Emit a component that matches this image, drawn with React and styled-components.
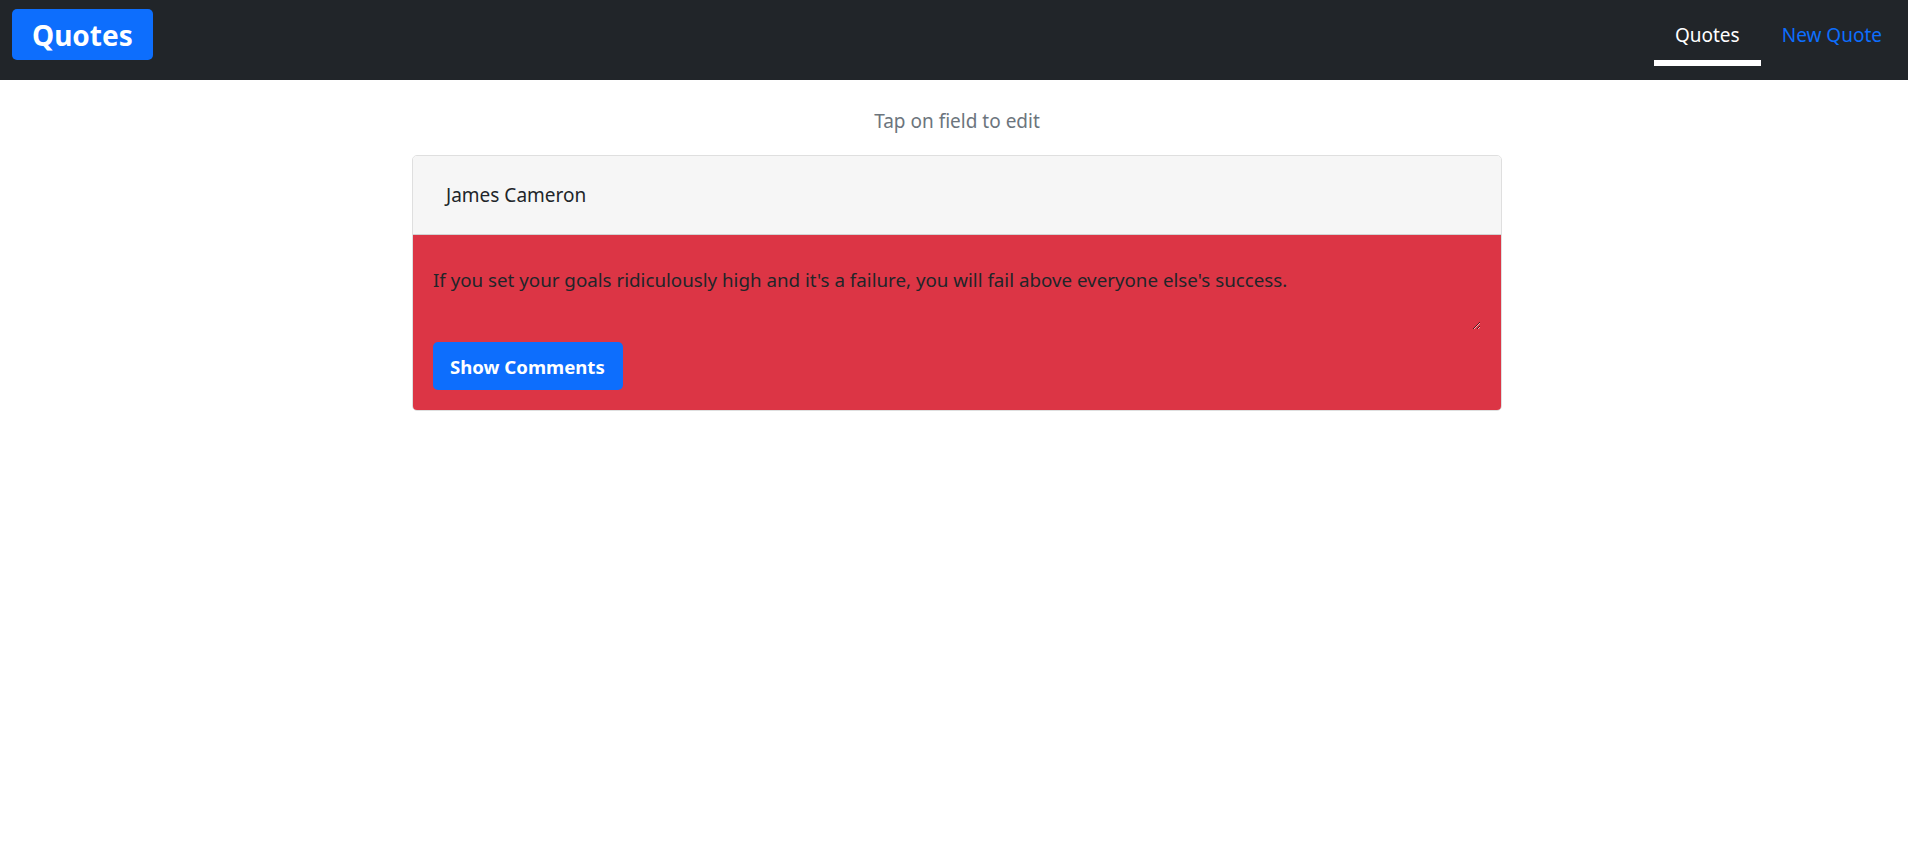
import React, { useState } from 'react';
import styled, { createGlobalStyle } from 'styled-components';

const GlobalStyle = createGlobalStyle`
  body {
    margin: 0;
    background: #fff;
    font-family: "Noto Sans", "Open Sans", sans-serif;
    color: #212529;
  }
  * { box-sizing: border-box; }
`;

const Header = styled.header`
  height: 80px;
  background: #212529;
  display: flex;
  align-items: flex-start;
  justify-content: space-between;
  padding: 9px 26px 0 12px;
`;

const Brand = styled.a`
  display: flex;
  align-items: center;
  height: 51px;
  padding: 0 20px;
  background: #0d6efd;
  border-radius: 5px;
  color: #fff;
  font-size: 28px;
  font-weight: 700;
  text-decoration: none;
`;

const Nav = styled.nav`
  display: flex;
  align-items: flex-start;
  gap: 21px;
  margin-top: -9px;
`;

const NavLink = styled.a`
  display: block;
  padding: 22px ${({ $active }) => ($active ? '21px' : '0')} 12px;
  font-size: 19px;
  line-height: 26px;
  color: ${({ $active }) => ($active ? '#fff' : '#0d6efd')};
  text-decoration: none;
  border-bottom: 6px solid ${({ $active }) => ($active ? '#fff' : 'transparent')};
`;

const Main = styled.main`
  display: flex;
  flex-direction: column;
  align-items: center;
  padding: 29px 0 0 6px;
`;

const Hint = styled.p`
  margin: 0 0 21px;
  font-size: 19px;
  line-height: 25px;
  color: #6c757d;
`;

const Card = styled.section`
  width: 1090px;
  border: 1px solid #dfdfdf;
  border-radius: 5px;
  overflow: hidden;
`;

const CardHeader = styled.div`
  height: 79px;
  display: flex;
  align-items: center;
  padding: 0 33px;
  background: #f6f6f6;
  border-bottom: 1px solid #d2d2d2;
  font-size: 19px;
`;

const CardBody = styled.div`
  background: #dc3545;
  padding: 20px;
  display: flex;
  flex-direction: column;
  align-items: flex-start;
  gap: 12px;
`;

const QuoteText = styled.textarea`
  width: 100%;
  height: 75px;
  padding: 11px 0 0;
  border: none;
  outline: none;
  background: transparent;
  color: #212529;
  font-family: inherit;
  font-size: 18.75px;
  line-height: 28px;
  resize: vertical;
`;

const Button = styled.button`
  height: 48px;
  padding: 0 18px 0 17px;
  border: none;
  border-radius: 5px;
  background: #0d6efd;
  color: #fff;
  font-family: inherit;
  font-size: 18.6px;
  font-weight: 700;
  cursor: pointer;
`;

const App = () => {
  const [quote, setQuote] = useState(
    "If you set your goals ridiculously high and it's a failure, you will fail above everyone else's success."
  );

  return (
    <>
      <GlobalStyle />
      <Header>
        <Brand href="#">Quotes</Brand>
        <Nav>
          <NavLink href="#" $active>Quotes</NavLink>
          <NavLink href="#">New Quote</NavLink>
        </Nav>
      </Header>
      <Main>
        <Hint>Tap on field to edit</Hint>
        <Card>
          <CardHeader>James Cameron</CardHeader>
          <CardBody>
            <QuoteText value={quote} onChange={(e) => setQuote(e.target.value)} />
            <Button>Show Comments</Button>
          </CardBody>
        </Card>
      </Main>
    </>
  );
};

export default App;
